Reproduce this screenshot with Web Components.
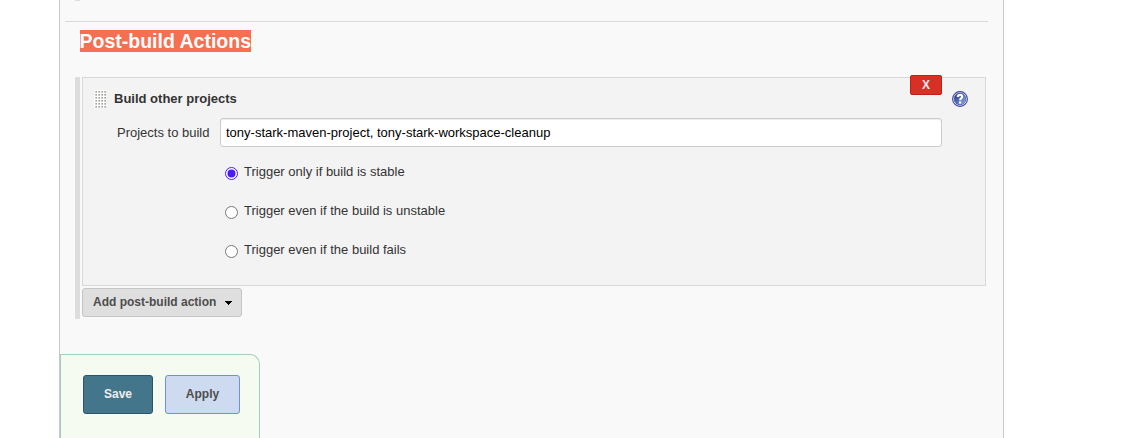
<!DOCTYPE html>
<html lang="en"><head><meta charset="utf-8"><title>Post-build Actions</title>
<style>html,body{margin:0;height:100%;overflow:hidden;background:#fff}body{font:13px "Liberation Sans",Arial,sans-serif;color:#333}</style></head>
<body><config-page></config-page>
<script>
const define=(name,html,setup)=>customElements.define(name,class extends HTMLElement{
  constructor(){super();this.attachShadow({mode:'open'}).innerHTML='<style>*{box-sizing:border-box}:host{box-sizing:border-box}</style>'+html;}
  connectedCallback(){if(setup)setup(this,this.shadowRoot);}
});
define('section-heading',`<style>:host{display:flex;height:22px;margin:8px 0 0 19.5px}
h2{margin:0;font-size:19.5px;line-height:22px;font-weight:bold;color:#fff;background:#f66f52;white-space:nowrap}</style><h2><slot></slot></h2>`);
define('drag-handle',`<style>:host{display:block;width:12px;height:18px}svg{display:block}</style>
<svg width="12" height="18" shape-rendering="crispEdges"><defs><pattern id="p" width="3" height="3" patternUnits="userSpaceOnUse"><rect width="3" height="3" fill="#fff"/><rect x="1" y="1" width="2" height="2" fill="#c3c3bf"/><rect x="2" y="1" width="1" height="1" fill="#a5a5a0"/><rect x="1" y="2" width="1" height="1" fill="#d2d2ce"/></pattern></defs><rect width="12" height="18" fill="url(#p)"/></svg>`);
define('help-icon',`<style>:host{display:block;width:16px;height:16px}svg{display:block}</style>
<svg width="16" height="16" viewBox="0 0 16 16"><defs><linearGradient id="g" x1="0" y1="0" x2="1" y2="1"><stop offset=".1" stop-color="#253e91"/><stop offset=".4" stop-color="#4963ae"/><stop offset="1" stop-color="#9cb4e0"/></linearGradient></defs><circle cx="8" cy="8" r="7.4" fill="#fff" stroke="#36439a" stroke-width="1.1"/><circle cx="8" cy="8" r="5.9" fill="url(#g)" stroke="#36439a" stroke-width=".6"/><path d="M5.8 6C6 3.1 10.4 3.2 10.2 5.8C10.1 7.3 8.1 7.3 8.1 9.3" fill="none" stroke="#fff" stroke-width="2.1"/><path d="M7 10.4h2.2v2.2H7z" fill="#fff"/></svg>`);
define('delete-button',`<style>:host{display:block;width:32px;height:20px}button{width:100%;height:100%;padding:0;border:1px solid #c41c16;border-radius:2px;background:#d93025;color:#f5e9e9;font:bold 12px/18px "Liberation Sans",Arial,sans-serif}</style><button><slot></slot></button>`);
define('text-field',`<style>:host{display:block;width:722px;height:29px}input{display:block;width:100%;height:100%;padding:0 5px;border:1px solid #ccc;border-radius:3px;background:#fff;color:#000;font:13px "Liberation Sans",Arial,sans-serif;box-shadow:inset 0 1px 1px rgba(0,0,0,.075)}</style><input type="text">`,(h,r)=>{r.querySelector('input').value=h.getAttribute('value')});
define('radio-option',`<style>:host{display:block;height:39px}label{display:flex;align-items:flex-start}svg{display:block;margin:4px 6px 0 0;flex:none}span{line-height:17px;white-space:nowrap}.dot{display:none}:host([checked]) .dot{display:block}:host([checked]) .ring{stroke:#4b1cff}</style>
<label><svg width="13" height="13"><circle class="ring" cx="6.5" cy="6.5" r="6" fill="#fff" stroke="#767676"/><circle class="dot" cx="6.5" cy="6.5" r="4" fill="#4b1cff"/></svg><span><slot></slot></span></label>`);
define('menu-button',`<style>:host{display:block;width:160px;height:29px}button{display:flex;align-items:center;width:100%;height:100%;padding:0 9px 2px 10px;border:1px solid #c5c5c5;border-radius:3px;background:#dfdfdf;color:#4d4d4d;font:bold 12px "Liberation Sans",Arial,sans-serif;justify-content:space-between;white-space:nowrap}svg{margin-top:3px}</style>
<button><slot></slot><svg width="7" height="4" shape-rendering="crispEdges"><path d="M0 0h7v1H0zM1 1h5v1H1zM2 2h3v1H2zM3 3h1v1H3z"/></svg></button>`);
define('action-button',`<style>:host{display:block;width:75px;height:39px}button{width:100%;height:100%;padding:0 0 2px;border:1px solid #7092ce;border-radius:3px;background:#cedaef;color:#4d4d4d;font:bold 12px "Liberation Sans",Arial,sans-serif}:host([primary]){width:70px}:host([primary]) button{background:#44768b;border-color:#2c5567;color:#eee}</style><button><slot></slot></button>`);
define('save-bar',`<style>:host{display:flex;align-items:flex-start;gap:12px;width:200px;height:90px;margin-top:35px;padding:20px 0 0 22px;background:#f5fbf1;border:1px solid #9fd1b9;border-bottom:0;border-radius:0 10px 0 0}</style><slot></slot>`);
define('build-step',`<style>:host{display:block;position:relative;width:904px;height:209px;border:1px solid #d8d8d8;background:#f3f3f3}
.head{display:flex;height:40px;padding:12px 17px 0 11px}.head b{margin-left:8px;line-height:18px;flex:1}.head help-icon{margin-top:1px}
delete-button{position:absolute;right:43px;top:-3px}
.row{display:flex;align-items:center}.row span{width:126.5px;margin-right:10.5px;text-align:right}.options{padding:16px 0 0 142px}</style>
<div class="head"><drag-handle></drag-handle><b>Build other projects</b><help-icon></help-icon></div><delete-button>X</delete-button>
<div class="row"><span>Projects to build</span><text-field value="tony-stark-maven-project, tony-stark-workspace-cleanup"></text-field></div>
<div class="options"><radio-option checked>Trigger only if build is stable</radio-option><radio-option>Trigger even if the build is unstable</radio-option><radio-option>Trigger even if the build fails</radio-option></div>`);
define('config-page',`<style>:host{display:block;width:945px;height:438px;margin-left:59px;border:solid #c9c9c9;border-width:0 1px;background:#f9f9f9}
.stub{width:5px;height:1px;margin-left:15px;background:#ddd}.rule{height:1px;margin:20px 15px 0 5px;background:#d9d9d9}
.section{display:flex;flex-direction:column;gap:2px;height:242px;margin:25px 0 0 15px;border-left:5px solid #ddd;padding-left:2px}</style>
<div class="stub"></div><div class="rule"></div><section-heading>Post-build Actions</section-heading>
<div class="section"><build-step></build-step><menu-button>Add post-build action</menu-button></div>
<save-bar><action-button primary>Save</action-button><action-button>Apply</action-button></save-bar>`);
</script></body></html>
